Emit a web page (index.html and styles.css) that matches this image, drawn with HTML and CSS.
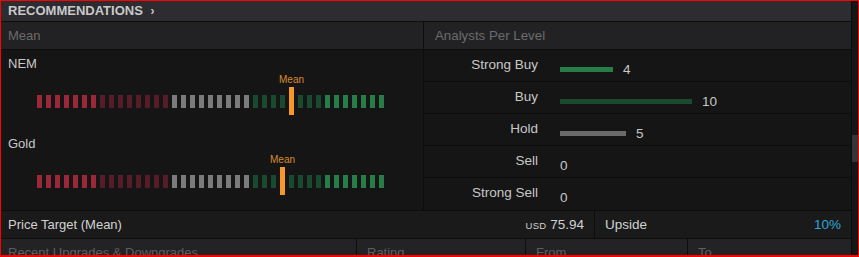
FILE: index.html
```html
<!DOCTYPE html>
<html lang="en">
<head>
    <meta charset="UTF-8">
    <title>Recommendations</title>
    <link rel="stylesheet" href="styles.css">
</head>
<body>
    <div class="frame">
        <div class="panel">
            <div class="title">RECOMMENDATIONS <span class="chevron">&rsaquo;</span></div>

            <div class="subhead">
                <div class="cell-left">Mean</div>
                <div class="cell-right">Analysts Per Level</div>
            </div>

            <div class="body">
                <div class="means">
                    <div class="mean-block">
                        <div class="ticker">NEM</div>
                        <div class="gauge" data-mean="28"></div>
                    </div>
                    <div class="mean-block">
                        <div class="ticker">Gold</div>
                        <div class="gauge" data-mean="27"></div>
                    </div>
                </div>

                <div class="levels">
                    <div class="level">
                        <div class="level-name">Strong Buy</div>
                        <div class="level-value"><span class="bar strong-buy" style="width:53px"></span>4</div>
                    </div>
                    <div class="level">
                        <div class="level-name">Buy</div>
                        <div class="level-value"><span class="bar buy" style="width:132px"></span>10</div>
                    </div>
                    <div class="level">
                        <div class="level-name">Hold</div>
                        <div class="level-value"><span class="bar hold" style="width:66px"></span>5</div>
                    </div>
                    <div class="level">
                        <div class="level-name">Sell</div>
                        <div class="level-value">0</div>
                    </div>
                    <div class="level">
                        <div class="level-name">Strong Sell</div>
                        <div class="level-value">0</div>
                    </div>
                </div>
            </div>

            <div class="price-row">
                <div class="price-cell">
                    <span>Price Target (Mean)</span>
                    <span class="price"><span class="currency">USD</span> 75.94</span>
                </div>
                <div class="upside-cell">
                    <span>Upside</span>
                    <span class="upside">10%</span>
                </div>
            </div>

            <div class="changes-head">
                <div class="ch-col ch-first">Recent Upgrades &amp; Downgrades</div>
                <div class="ch-col ch-rating">Rating</div>
                <div class="ch-col ch-from">From</div>
                <div class="ch-col ch-to">To</div>
            </div>
        </div>
        <div class="scrollbar"><div class="thumb"></div></div>
    </div>

    <script>
        // segment groups from strong sell to strong buy
        const groups = [['ss', 7], ['s', 8], ['h', 9], ['b', 8], ['sb', 7]];

        document.querySelectorAll('.gauge').forEach(gauge => {
            const mean = parseInt(gauge.dataset.mean, 10);
            let i = 0;
            groups.forEach(([cls, count]) => {
                for (let k = 0; k < count; k++, i++) {
                    const seg = document.createElement('span');
                    seg.className = i === mean ? 'seg mark' : 'seg ' + cls;
                    gauge.appendChild(seg);
                }
            });
        });
    </script>
</body>
</html>
```

FILE: styles.css
```css
* {
    box-sizing: border-box;
}
body {
    margin: 0;
    background: #151515;
    font-family: "Liberation Sans", Arial, sans-serif;
    font-size: 13px;
    color: #c8c8c8;
}
.frame {
    width: 859px;
    height: 257px;
    border: 1px solid #ff0000;
    border-bottom-width: 2px;
    display: flex;
    overflow: hidden;
}
.panel {
    width: 850px;
    display: flex;
    flex-direction: column;
}
.scrollbar {
    width: 7px;
    background: #161616;
    border-left: 1px solid #0b0b0b;
}
.thumb {
    height: 27px;
    margin-top: 134px;
    background: #353538;
}

/* title bar */
.title {
    height: 22px;
    line-height: 19px;
    padding-left: 7px;
    background: #2c2c31;
    border-bottom: 1px solid #0d0d0d;
    font-weight: bold;
    color: #c9c9c9;
}
.chevron {
    margin-left: 4px;
    font-size: 12px;
}

/* column headings */
.subhead {
    display: flex;
    height: 28px;
    line-height: 27px;
    background: #222225;
    border-bottom: 1px solid #0d0d0d;
    color: #6b6b6b;
}
.cell-left {
    width: 423px;
    padding-left: 7px;
    border-right: 1px solid #0d0d0d;
}
.cell-right {
    flex: 1;
    padding-left: 11px;
    font-size: 13.3px;
}

/* main body */
.body {
    display: flex;
    height: 161px;
    border-bottom: 1px solid #0d0d0d;
}
.means {
    width: 423px;
    border-right: 1px solid #0d0d0d;
}
.mean-block {
    height: 80px;
    padding-top: 5px;
}
.ticker {
    line-height: 18px;
    padding-left: 7px;
}
.gauge {
    display: flex;
    align-items: center;
    gap: 4px;
    height: 28px;
    margin: 14px 0 0 36px;
}
.seg {
    width: 5px;
    height: 13px;
}
.seg.ss { background: #9b2838; }
.seg.s  { background: #561c27; }
.seg.h  { background: #7b7b7b; }
.seg.b  { background: #194a30; }
.seg.sb { background: #267d47; }
.seg.mark {
    height: 28px;
    background: #f7962a;
    position: relative;
}
.seg.mark::before {
    content: 'Mean';
    position: absolute;
    bottom: calc(100% + 2px);
    left: 50%;
    transform: translateX(-50%);
    font-size: 10px;
    color: #d9892b;
}

.levels {
    flex: 1;
    font-size: 13.5px;
}
.level {
    display: flex;
    height: 32px;
    border-bottom: 1px solid #0d0d0d;
}
.level:last-child {
    border-bottom: none;
}
.level-name {
    width: 114px;
    padding-top: 6px;
    line-height: 18px;
    text-align: right;
}
.level-value {
    display: flex;
    align-items: center;
    gap: 10px;
    height: 18px;
    margin: 10px 0 0 22px;
}
.bar {
    height: 5px;
}
.bar.strong-buy { background: #267d47; }
.bar.buy { background: #1c4a31; }
.bar.hold { background: #6a6a6a; }

/* price target */
.price-row {
    display: flex;
    height: 28px;
    line-height: 27px;
    background: #1a1a1a;
    border-bottom: 1px solid #0d0d0d;
    color: #d2d2d2;
}
.price-cell {
    width: 594px;
    display: flex;
    justify-content: space-between;
    padding: 0 10px 0 7px;
    border-right: 1px solid #0d0d0d;
}
.currency {
    font-size: 9.5px;
    letter-spacing: 0.3px;
}
.price {
    font-size: 13.5px;
}
.upside-cell {
    flex: 1;
    display: flex;
    justify-content: space-between;
    padding: 0 10px;
    font-size: 13.5px;
}
.upside {
    color: #2ea6d6;
}

/* recent changes heading */
.changes-head {
    display: flex;
    flex: 1;
    line-height: 27px;
    background: #232326;
    color: #5e5e5e;
}
.ch-col {
    padding-left: 10px;
    border-right: 1px solid #0d0d0d;
}
.ch-first {
    width: 356px;
    padding-left: 7px;
}
.ch-rating {
    width: 169px;
}
.ch-from {
    width: 162px;
}
.ch-to {
    flex: 1;
    border-right: none;
}
```
